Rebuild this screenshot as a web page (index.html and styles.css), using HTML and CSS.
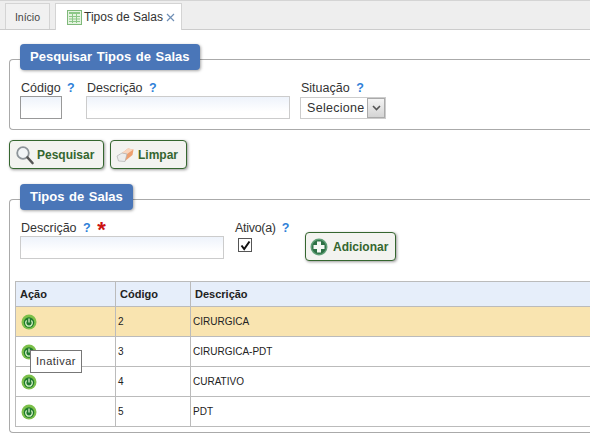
FILE: index.html
```html
<!DOCTYPE html>
<html lang="pt-BR">

<head>
    <meta charset="UTF-8">
    <title>Tipos de Salas</title>
    <link rel="stylesheet" href="styles.css">
</head>

<body>
    <!-- Tabs -->
    <div class="tabs">
        <div class="tab tab-home">Início</div>
        <div class="tab tab-active">
            <svg class="tab-icon" width="15" height="15" viewBox="0 0 15 15">
                <rect x="0.5" y="0.5" width="14" height="14" fill="#e4f3e0" stroke="#7fb97a"/>
                <rect x="2" y="2" width="11" height="2" fill="#8cc787"/>
                <path d="M2 6.5H13M2 9H13M2 11.5H13M5.5 4V13M9.5 4V13" stroke="#8cc787" fill="none"/>
            </svg>
            <span>Tipos de Salas</span>
            <svg class="tab-close" width="9" height="9" viewBox="0 0 9 9">
                <path d="M1 1L8 8M8 1L1 8" stroke="#6f8fb5" stroke-width="1.2" fill="none"/>
            </svg>
        </div>
    </div>

    <div class="content">
        <!-- Search panel -->
        <div class="panel panel-search">
            <div class="panel-title">Pesquisar Tipos de Salas</div>
            <div class="fields">
                <div class="field field-codigo">
                    <label>Código <span class="help">?</span></label>
                    <input type="text" class="input input-codigo">
                </div>
                <div class="field field-descricao">
                    <label>Descrição <span class="help">?</span></label>
                    <input type="text" class="input input-descricao">
                </div>
                <div class="field field-situacao">
                    <label>Situação <span class="help">?</span></label>
                    <div class="select-box">
                        <select class="select">
                            <option>Selecione</option>
                        </select>
                        <span class="select-arrow">
                            <svg width="9" height="6" viewBox="0 0 9 6">
                                <path d="M1 1L4.5 4.5L8 1" stroke="#555" stroke-width="1.6" fill="none"/>
                            </svg>
                        </span>
                    </div>
                </div>
            </div>
        </div>

        <div class="actions">
            <button class="btn btn-pesquisar">
                <svg width="20" height="20" viewBox="0 0 20 20">
                    <circle cx="8" cy="8" r="5.8" fill="#f1f4f6" stroke="#8d9499" stroke-width="1.8"/>
                    <path d="M12.5 12.5L17.5 18" stroke="#555" stroke-width="2.6" stroke-linecap="round"/>
                </svg>
                Pesquisar
            </button>
            <button class="btn btn-limpar">
                <svg width="18" height="16" viewBox="0 0 18 16">
                    <path d="M6 6L12 1.5L17.5 2.5L16.5 8L9 14Z" fill="#ee9f6f"/>
                    <path d="M6 6L12 1.5L17.5 2.5L11 7Z" fill="#f9d6bf"/>
                    <path d="M1 9L6 6L11 7L9 14.5L2.5 14Z" fill="#ececec" stroke="#b0b0b0" stroke-width="0.7"/>
                </svg>
                Limpar
            </button>
        </div>

        <!-- Register panel -->
        <div class="panel panel-list">
            <div class="panel-title">Tipos de Salas</div>
            <div class="fields fields-add">
                <div class="field field-nome">
                    <label>Descrição <span class="help">?</span> <span class="required">*</span></label>
                    <input type="text" class="input input-nome">
                </div>
                <div class="field field-ativo">
                    <label>Ativo(a) <span class="help">?</span></label>
                    <span class="check">
                        <svg width="11" height="11" viewBox="0 0 11 11">
                            <path d="M1.5 5.5L4.2 9L9.5 1.5" stroke="#111" stroke-width="2" fill="none"/>
                        </svg>
                    </span>
                </div>
                <button class="btn btn-adicionar">
                    <svg width="18" height="18" viewBox="0 0 18 18">
                        <circle cx="9" cy="9" r="8.5" fill="#5f9f76"/>
                        <circle cx="9" cy="9" r="7" fill="#2d7145"/>
                        <path d="M7 3.5H11V7H14.5V11H11V14.5H7V11H3.5V7H7Z" fill="#f4f8f4"/>
                    </svg>
                    Adicionar
                </button>
            </div>

            <table class="grid">
                <thead>
                    <tr>
                        <th class="col-acao">Ação</th>
                        <th class="col-codigo">Código</th>
                        <th>Descrição</th>
                    </tr>
                </thead>
                <tbody>
                    <tr class="selected">
                        <td class="cell-action"><svg class="power" width="16" height="16" viewBox="0 0 16 16"><use href="#power"/></svg></td>
                        <td>2</td>
                        <td>CIRURGICA</td>
                    </tr>
                    <tr>
                        <td class="cell-action"><svg class="power" width="16" height="16" viewBox="0 0 16 16"><use href="#power"/></svg></td>
                        <td>3</td>
                        <td>CIRURGICA-PDT</td>
                    </tr>
                    <tr>
                        <td class="cell-action"><svg class="power" width="16" height="16" viewBox="0 0 16 16"><use href="#power"/></svg></td>
                        <td>4</td>
                        <td>CURATIVO</td>
                    </tr>
                    <tr>
                        <td class="cell-action"><svg class="power" width="16" height="16" viewBox="0 0 16 16"><use href="#power"/></svg></td>
                        <td>5</td>
                        <td>PDT</td>
                    </tr>
                </tbody>
            </table>
        </div>
    </div>

    <div class="tooltip">Inativar</div>

    <svg class="defs" width="0" height="0">
        <symbol id="power" viewBox="0 0 16 16">
            <circle cx="8" cy="8" r="7.5" fill="#7cc04a"/>
            <circle cx="8" cy="8.5" r="5.2" fill="#1f7a2e"/>
            <path d="M5.7 6.5A3.3 3.3 0 1 0 10.3 6.5" stroke="#d5efc5" stroke-width="1.3" fill="none"/>
            <path d="M8 4.5V8.5" stroke="#d5efc5" stroke-width="1.3" fill="none"/>
        </symbol>
    </svg>
</body>

</html>
```

FILE: styles.css
```css
html,
body {
    height: 436px;
    overflow: hidden;
}

body {
    margin: 0;
    position: relative;
    background: white;
    color: #333;
    font-family: "Liberation Sans", Arial, sans-serif;
    font-size: 12.5px;
}

/* tabs */
.tabs {
    display: flex;
    align-items: flex-end;
    gap: 5px;
    height: 28px;
    padding-left: 5px;
    background-color: #eeeeee;
    border-top: 1px solid #d4d4d4;
    border-bottom: 1px solid #cccccc;
}

.tab {
    display: flex;
    align-items: center;
    box-sizing: border-box;
    height: 26px;
    background-color: #f1f1f1;
    border: 1px solid #d4d4d4;
    border-bottom: none;
    color: #444;
    font-size: 10.5px;
}

.tab-home {
    justify-content: center;
    width: 45px;
}

.tab-active {
    width: 127px;
    height: 27px;
    margin-bottom: -1px;
    padding-left: 11px;
    background-color: white;
    color: #333;
    font-size: 12px;
}

.tab-icon {
    margin-right: 2px;
}

.tab-close {
    margin-left: 3px;
}

/* panels */
.content {
    padding: 29px 0 0 9px;
}

.panel {
    position: relative;
    box-sizing: border-box;
    border: 1px solid #aaaaaa;
    border-right: none;
    border-radius: 4px 0 0 4px;
    padding: 0 10px;
}

.panel-search {
    height: 71px;
}

.panel-list {
    height: 234px;
    margin-top: 30px;
    padding: 0 0 0 5px;
}

.panel-title {
    box-sizing: border-box;
    width: fit-content;
    height: 26px;
    margin-top: -16px;
    padding: 0 10px;
    background-color: #4a76b8;
    border-radius: 4px;
    box-shadow: 1px 1px 3px rgba(0, 0, 0, 0.35);
    color: white;
    font-size: 13px;
    font-weight: bold;
    word-spacing: 1px;
    line-height: 25px;
}

.panel-list .panel-title {
    margin-left: 5px;
}

.fields {
    display: flex;
    margin-top: 10px;
}

.fields-add {
    margin-left: 5px;
}

.field {
    display: flex;
    flex-direction: column;
    align-items: flex-start;
}

.field label {
    height: 16px;
    line-height: 17px;
    padding-left: 1px;
    white-space: nowrap;
}

.field-codigo {
    width: 66px;
}

.field-descricao {
    width: 214px;
}

.field-nome {
    width: 215px;
}

.field-ativo {
    width: 70px;
}

.field-ativo label {
    padding-left: 0;
    letter-spacing: -0.3px;
}

.help {
    margin-left: 3px;
    color: #2f7fd8;
    font-weight: bold;
}

.required {
    margin-left: 3px;
    color: #cc1111;
    font-size: 22px;
    font-weight: bold;
    line-height: 15px;
    vertical-align: -5px;
}

.input {
    box-sizing: border-box;
    height: 23px;
    margin: 0;
    padding: 0;
    border: 1px solid #cccccc;
    background: linear-gradient(#eef3fb, white 70%);
}

.input-codigo {
    width: 42px;
    border-color: #999999;
}

.input-descricao,
.input-nome {
    width: 204px;
}

.select-box {
    display: flex;
    box-sizing: border-box;
    width: 86px;
    height: 22px;
    margin-top: 1px;
    border: 1px solid #cccccc;
}

.select {
    appearance: none;
    flex: 1;
    min-width: 0;
    padding: 0 0 0 6px;
    border: none;
    background: white;
    color: #333;
    font-family: "Liberation Sans", Arial, sans-serif;
    font-size: 12.5px;
    letter-spacing: 0.3px;
}

.select-arrow {
    display: flex;
    align-items: center;
    justify-content: center;
    box-sizing: border-box;
    width: 18px;
    background: linear-gradient(#f4f4f4, #d4d4d4);
    border: 1px solid #aaaaaa;
}

/* buttons */
.actions {
    display: flex;
    gap: 6px;
    margin-top: 10px;
}

.btn {
    display: flex;
    align-items: center;
    gap: 5px;
    box-sizing: border-box;
    height: 29px;
    margin: 0;
    padding: 0 0 0 5px;
    background-color: #f3f3f0;
    border: 1px solid #35662f;
    border-radius: 4px;
    box-shadow: 1px 1px 3px rgba(0, 0, 0, 0.4);
    color: #35662f;
    font-family: "Liberation Sans", Arial, sans-serif;
    font-size: 12px;
    font-weight: bold;
}

.btn svg {
    flex-shrink: 0;
}

.btn-pesquisar {
    gap: 2px;
    width: 95px;
}

.btn-limpar {
    gap: 4px;
    width: 77px;
}

.btn-adicionar {
    width: 91px;
    margin-top: 12px;
    padding-left: 4px;
}

.check {
    display: flex;
    align-items: center;
    justify-content: center;
    box-sizing: border-box;
    width: 14px;
    height: 14px;
    margin: 2px 0 0 3px;
    background: white;
    border: 1px solid #555555;
}

/* table */
.grid {
    width: 575px;
    margin-top: 20px;
    border-collapse: collapse;
    color: #222;
    font-size: 10px;
}

.grid th,
.grid td {
    box-sizing: border-box;
    padding: 0 2px;
    border: 1px solid #bbbbbb;
    text-align: left;
}

.grid th:last-child,
.grid td:last-child {
    border-right: none;
}

.grid th {
    height: 25px;
    padding: 0 4px;
    background-color: #e6eefa;
    font-size: 11px;
}

.grid td {
    height: 30px;
}

.grid .cell-action {
    padding-left: 5px;
}

.col-acao {
    width: 100px;
}

.col-codigo {
    width: 75px;
}

.selected td {
    background-color: #f9e4b0;
}

.power {
    display: block;
}

/* tooltip for the hovered action */
.tooltip {
    position: absolute;
    top: 350px;
    left: 30px;
    box-sizing: border-box;
    width: 52px;
    height: 23px;
    background-color: white;
    border: 1px solid #777777;
    font-size: 11px;
    letter-spacing: 0.5px;
    line-height: 21px;
    text-align: center;
}

.defs {
    position: absolute;
}
```
